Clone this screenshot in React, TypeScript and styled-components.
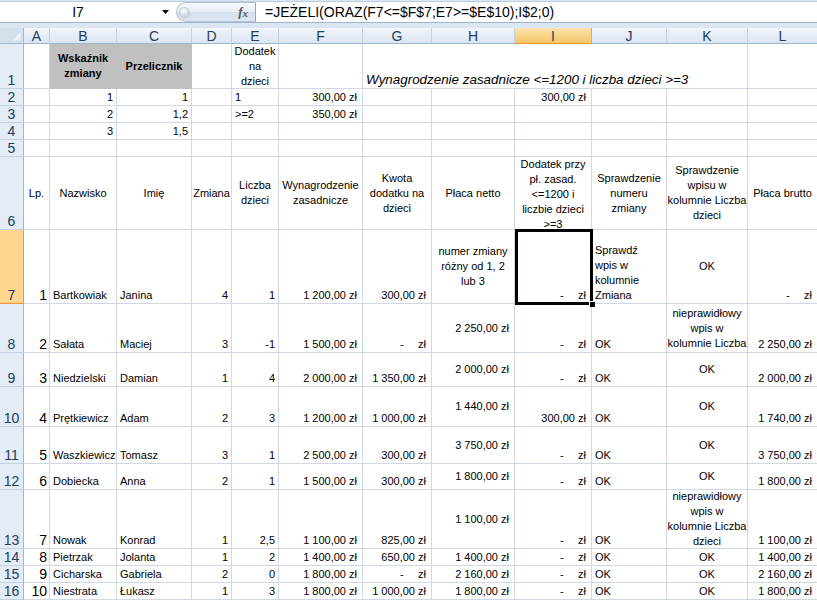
import * as React from 'react';
import styled, { createGlobalStyle } from 'styled-components';

const GlobalStyle = createGlobalStyle`
  html, body {
    margin: 0;
    padding: 0;
    background: #fff;
    overflow: hidden;
  }
  body {
    font-family: "Liberation Sans", Arial, sans-serif;
  }
`;

type H = 'left' | 'right' | 'center';
type V = 'top' | 'middle' | 'bottom';

interface Spec {
  t?: string;
  h?: H;
  v?: V;
  bold?: boolean;
  italic?: boolean;
  fill?: string;
  size?: number;
  span?: number;
  pr?: number;
  pt?: number;
}

const GRID = '#d0d7e5';
const HEAD_LINE = '#9eb6ce';

const Window = styled.div`
  width: 817px;
  height: 600px;
  overflow: hidden;
  background: #dce6f3;
  padding-top: 1px;
  box-sizing: border-box;
`;

const FormulaBar = styled.div`
  display: flex;
  height: 22px;
  box-sizing: border-box;
  background: #fff;
  border-top: 1px solid #bccde2;
  border-bottom: 1px solid #9fb3cb;
  margin-bottom: 5px;
`;

const NameBox = styled.div`
  width: 176px;
  display: flex;
  align-items: center;
  font-size: 14px;
  color: #000;
`;

const NameText = styled.span`
  width: 156px;
  text-align: center;
`;

const DropArrow = styled.svg`
  margin-left: 6px;
`;

const FxButton = styled.div`
  width: 80px;
  height: 20px;
  box-sizing: border-box;
  display: flex;
  align-items: center;
  border: 1px solid #b3c4d9;
  border-right-color: #8fa6c2;
  border-radius: 10px 0 0 10px;
  background: linear-gradient(180deg, #f6f9fc 0%, #e6edf6 48%, #d3dfee 52%, #dde7f3 100%);
`;

const Knob = styled.span`
  width: 9px;
  height: 9px;
  margin-left: 3px;
  border-radius: 50%;
  background: radial-gradient(circle at 40% 35%, #ffffff 0%, #d5dbe3 55%, #a9b4c2 100%);
  box-shadow: 0 0 0 1px #c3ccd8;
`;

const Fx = styled.span`
  margin-left: auto;
  margin-right: 7px;
  font-family: "Liberation Serif", "Times New Roman", serif;
  font-style: italic;
  font-weight: bold;
  font-size: 13px;
  color: #5b5b5b;
  line-height: 18px;
`;

const FxSub = styled.span`
  font-size: 11px;
  position: relative;
  top: 1px;
`;

const Formula = styled.div`
  flex: 1;
  padding-left: 9px;
  font-size: 14px;
  line-height: 20px;
  color: #000;
  white-space: pre;
`;

const Sheet = styled.div<{ $rows: string }>`
  display: grid;
  grid-template-columns: 24px 26px 67px 75px 40px 47px 84px 69px 83px 77px 75px 81px 70px;
  grid-template-rows: ${p => p.$rows};
  background: #fff;
`;

const Corner = styled.div`
  box-sizing: border-box;
  background: #d5e0ef;
  border-right: 1px solid ${HEAD_LINE};
  border-bottom: 1px solid ${HEAD_LINE};
  display: flex;
  align-items: flex-end;
  justify-content: flex-end;
  padding: 0 2px 2px 0;
`;

const ColHead = styled.div<{ $active?: boolean }>`
  box-sizing: border-box;
  display: flex;
  align-items: center;
  justify-content: center;
  font-size: 14px;
  line-height: 16px;
  color: #223c5e;
  background: ${p =>
    p.$active
      ? 'linear-gradient(180deg, #fbe3b0 0%, #f8d48a 50%, #f3c567 100%)'
      : 'linear-gradient(180deg, #f3f6fb 0%, #e6edf7 50%, #dbe5f2 100%)'};
  border-right: 1px solid ${p => (p.$active ? '#f2a64c' : '#c2d1e3')};
  border-bottom: 1px solid ${p => (p.$active ? '#f29436' : HEAD_LINE)};
`;

const RowHead = styled.div<{ $row: number; $active?: boolean }>`
  grid-column: 1;
  grid-row: ${p => p.$row};
  box-sizing: border-box;
  display: flex;
  align-items: flex-end;
  justify-content: center;
  font-size: 14px;
  line-height: 16px;
  color: #223c5e;
  background: ${p => (p.$active ? '#ffd68f' : '#e4ecf7')};
  border-right: 1px solid ${p => (p.$active ? '#f29436' : HEAD_LINE)};
  border-bottom: 1px solid ${p => (p.$active ? '#f29436' : '#c2d1e3')};
`;

const Cell = styled.div<{
  $h: H;
  $v: V;
  $bold?: boolean;
  $italic?: boolean;
  $fill?: string;
  $size: number;
  $row: number;
  $col: number;
  $span: number;
  $pr: number;
  $pt: number;
}>`
  box-sizing: border-box;
  display: flex;
  flex-direction: column;
  justify-content: ${p => (p.$v === 'top' ? 'flex-start' : p.$v === 'middle' ? 'center' : 'flex-end')};
  grid-row: ${p => p.$row};
  grid-column: ${p => p.$col} / span ${p => p.$span};
  text-align: ${p => p.$h};
  padding: ${p => p.$pt}px ${p => (p.$h === 'center' ? 0 : p.$pr)}px 0 ${p => (p.$h === 'center' ? 0 : 3)}px;
  overflow: hidden;
  white-space: pre;
  color: #000;
  font-size: ${p => p.$size}px;
  line-height: ${p => (p.$size > 11 ? 16 : 15)}px;
  font-weight: ${p => (p.$bold ? 'bold' : 'normal')};
  font-style: ${p => (p.$italic ? 'italic' : 'normal')};
  background: ${p => p.$fill ?? '#fff'};
  border-right: 1px solid ${p => p.$fill ?? GRID};
  border-bottom: 1px solid ${p => p.$fill ?? GRID};
`;

const Selection = styled.div<{ $col: number; $row: number }>`
  grid-column: ${p => p.$col};
  grid-row: ${p => p.$row};
  margin: -1px -1px -1px 0;
  border: 3px solid #000;
  position: relative;
  z-index: 2;
  pointer-events: none;
`;

const FillHandle = styled.span`
  position: absolute;
  right: -5px;
  bottom: -5px;
  width: 5px;
  height: 5px;
  background: #000;
  border: 1px solid #fff;
  border-right: none;
  border-bottom: none;
`;

const e: Spec = {};
const num = (t: string): Spec => ({ t, h: 'right' });
const txt = (t: string): Spec => ({ t, h: 'left' });
const mid = (t: string): Spec => ({ t, h: 'center', v: 'middle' });
const lp = (t: string): Spec => ({ t, h: 'right', size: 14, pr: 2 });
const zl = (t: string): Spec => ({ t: `${t} zł`, h: 'right', pr: 5 });
const zlMid = (t: string): Spec => ({ ...zl(t), v: 'middle' });
const zero: Spec = { t: '-\u2007\u2007\u2009zł', h: 'right', pr: 5 };
const ok = txt('OK');
const wrong = 'nieprawidłowy\nwpis w\nkolumnie Liczba\ndzieci';
// row 8 is too short: only the first three lines of the message show
const wrongShort = 'nieprawidłowy\nwpis w\nkolumnie Liczba';

const columns = ['A', 'B', 'C', 'D', 'E', 'F', 'G', 'H', 'I', 'J', 'K', 'L'];
const activeCol = 'I';
const activeRow = 7;
const GREY = '#c0c0c0';

const rows: { h: number; cells: Spec[] }[] = [
  {
    h: 45,
    cells: [
      e,
      { t: 'Wskaźnik\nzmiany', h: 'center', v: 'middle', bold: true, fill: GREY },
      { t: 'Przelicznik', h: 'center', v: 'middle', bold: true, fill: GREY },
      e,
      mid('Dodatek\nna\ndzieci'),
      e,
      { t: 'Wynagrodzenie zasadnicze <=1200 i liczba dzieci >=3', h: 'left', italic: true, size: 13.4, span: 5 },
      e,
    ],
  },
  { h: 17, cells: [e, num('1'), num('1'), e, txt('1'), zl('300,00'), e, e, zl('300,00'), e, e, e] },
  { h: 17, cells: [e, num('2'), num('1,2'), e, txt('>=2'), zl('350,00'), e, e, e, e, e, e] },
  { h: 17, cells: [e, num('3'), num('1,5'), e, e, e, e, e, e, e, e, e] },
  { h: 17, cells: [e, e, e, e, e, e, e, e, e, e, e, e] },
  {
    h: 73,
    cells: [
      mid('Lp.'),
      mid('Nazwisko'),
      mid('Imię'),
      mid('Zmiana'),
      mid('Liczba\ndzieci'),
      mid('Wynagrodzenie\nzasadnicze'),
      mid('Kwota\ndodatku na\ndzieci'),
      mid('Płaca netto'),
      { t: 'Dodatek przy\npł. zasad.\n<=1200 i\nliczbie dzieci\n>=3', h: 'center', v: 'top' },
      mid('Sprawdzenie\nnumeru\nzmiany'),
      mid('Sprawdzenie\nwpisu w\nkolumnie Liczba\ndzieci'),
      mid('Płaca brutto'),
    ],
  },
  {
    h: 74,
    cells: [
      lp('1'), txt('Bartkowiak'), txt('Janina'), num('4'), num('1'), zl('1 200,00'), zl('300,00'),
      mid('numer zmiany\nróżny od 1, 2\nlub 3'), zero, txt('Sprawdź\nwpis w\nkolumnie\nZmiana'), mid('OK'), zero,
    ],
  },
  {
    h: 49,
    cells: [
      lp('2'), txt('Sałata'), txt('Maciej'), num('3'), num('-1'), zl('1 500,00'), zero,
      zlMid('2 250,00'), zero, ok, { t: wrongShort, h: 'center', v: 'top', pt: 2 }, zl('2 250,00'),
    ],
  },
  {
    h: 34,
    cells: [
      lp('3'), txt('Niedzielski'), txt('Damian'), num('1'), num('4'), zl('2 000,00'), zl('1 350,00'),
      zlMid('2 000,00'), zero, ok, mid('OK'), zl('2 000,00'),
    ],
  },
  {
    h: 40,
    cells: [
      lp('4'), txt('Prętkiewicz'), txt('Adam'), num('2'), num('3'), zl('1 200,00'), zl('1 000,00'),
      zlMid('1 440,00'), zl('300,00'), ok, mid('OK'), zl('1 740,00'),
    ],
  },
  {
    h: 37,
    cells: [
      lp('5'), txt('Waszkiewicz'), txt('Tomasz'), num('3'), num('1'), zl('2 500,00'), zl('300,00'),
      zlMid('3 750,00'), zero, ok, mid('OK'), zl('3 750,00'),
    ],
  },
  {
    h: 26,
    cells: [
      lp('6'), txt('Dobiecka'), txt('Anna'), num('2'), num('1'), zl('1 500,00'), zl('300,00'),
      zlMid('1 800,00'), zero, ok, mid('OK'), zl('1 800,00'),
    ],
  },
  {
    h: 59,
    cells: [
      lp('7'), txt('Nowak'), txt('Konrad'), num('1'), num('2,5'), zl('1 100,00'), zl('825,00'),
      zlMid('1 100,00'), zero, ok, mid(wrong), zl('1 100,00'),
    ],
  },
  {
    h: 17,
    cells: [
      lp('8'), txt('Pietrzak'), txt('Jolanta'), num('1'), num('2'), zl('1 400,00'), zl('650,00'),
      zlMid('1 400,00'), zero, ok, mid('OK'), zl('1 400,00'),
    ],
  },
  {
    h: 17,
    cells: [
      lp('9'), txt('Cicharska'), txt('Gabriela'), num('2'), num('0'), zl('1 800,00'), zero,
      zlMid('2 160,00'), zero, ok, mid('OK'), zl('2 160,00'),
    ],
  },
  {
    h: 17,
    cells: [
      lp('10'), txt('Niestrata'), txt('Łukasz'), num('1'), num('3'), zl('1 800,00'), zl('1 000,00'),
      zlMid('1 800,00'), zero, ok, mid('OK'), zl('1 800,00'),
    ],
  },
];

function SheetRow({ index, cells }: { index: number; cells: Spec[] }) {
  const gridRow = index + 2;
  let col = 2;
  return (
    <>
      <RowHead $row={gridRow} $active={index + 1 === activeRow}>
        {index + 1}
      </RowHead>
      {cells.map((s, ci) => {
        const span = s.span ?? 1;
        const start = col;
        col += span;
        return (
          <Cell
            key={ci}
            $row={gridRow}
            $col={start}
            $span={span}
            $h={s.h ?? 'left'}
            $v={s.v ?? 'bottom'}
            $bold={s.bold}
            $italic={s.italic}
            $fill={s.fill}
            $size={s.size ?? 11}
            $pr={s.pr ?? 3}
            $pt={s.pt ?? 0}
          >
            {s.t ?? ''}
          </Cell>
        );
      })}
    </>
  );
}

export default function App() {
  const template = ['16px', ...rows.map(r => `${r.h}px`)].join(' ');
  const selCol = columns.indexOf(activeCol) + 2;

  return (
    <>
      <GlobalStyle />
      <Window>
        <FormulaBar>
          <NameBox>
            <NameText>I7</NameText>
            <DropArrow width="7" height="4" viewBox="0 0 7 4">
              <polygon points="0,0 7,0 3.5,4" fill="#000" />
            </DropArrow>
          </NameBox>
          <FxButton>
            <Knob />
            <Fx>
              f<FxSub>x</FxSub>
            </Fx>
          </FxButton>
          <Formula>=JEŻELI(ORAZ(F7&lt;=$F$7;E7&gt;=$E$10);I$2;0)</Formula>
        </FormulaBar>

        <Sheet $rows={template}>
          <Corner>
            <svg width="10" height="10" viewBox="0 0 10 10">
              <polygon points="10,0 10,10 0,10" fill="#eef2f8" stroke="#c4d2e4" strokeWidth="0.6" />
            </svg>
          </Corner>
          {columns.map(c => (
            <ColHead key={c} $active={c === activeCol}>
              {c}
            </ColHead>
          ))}

          {rows.map((row, ri) => (
            <SheetRow key={ri} index={ri} cells={row.cells} />
          ))}

          <Selection $col={selCol} $row={activeRow + 1}>
            <FillHandle />
          </Selection>
        </Sheet>
      </Window>
    </>
  );
}
